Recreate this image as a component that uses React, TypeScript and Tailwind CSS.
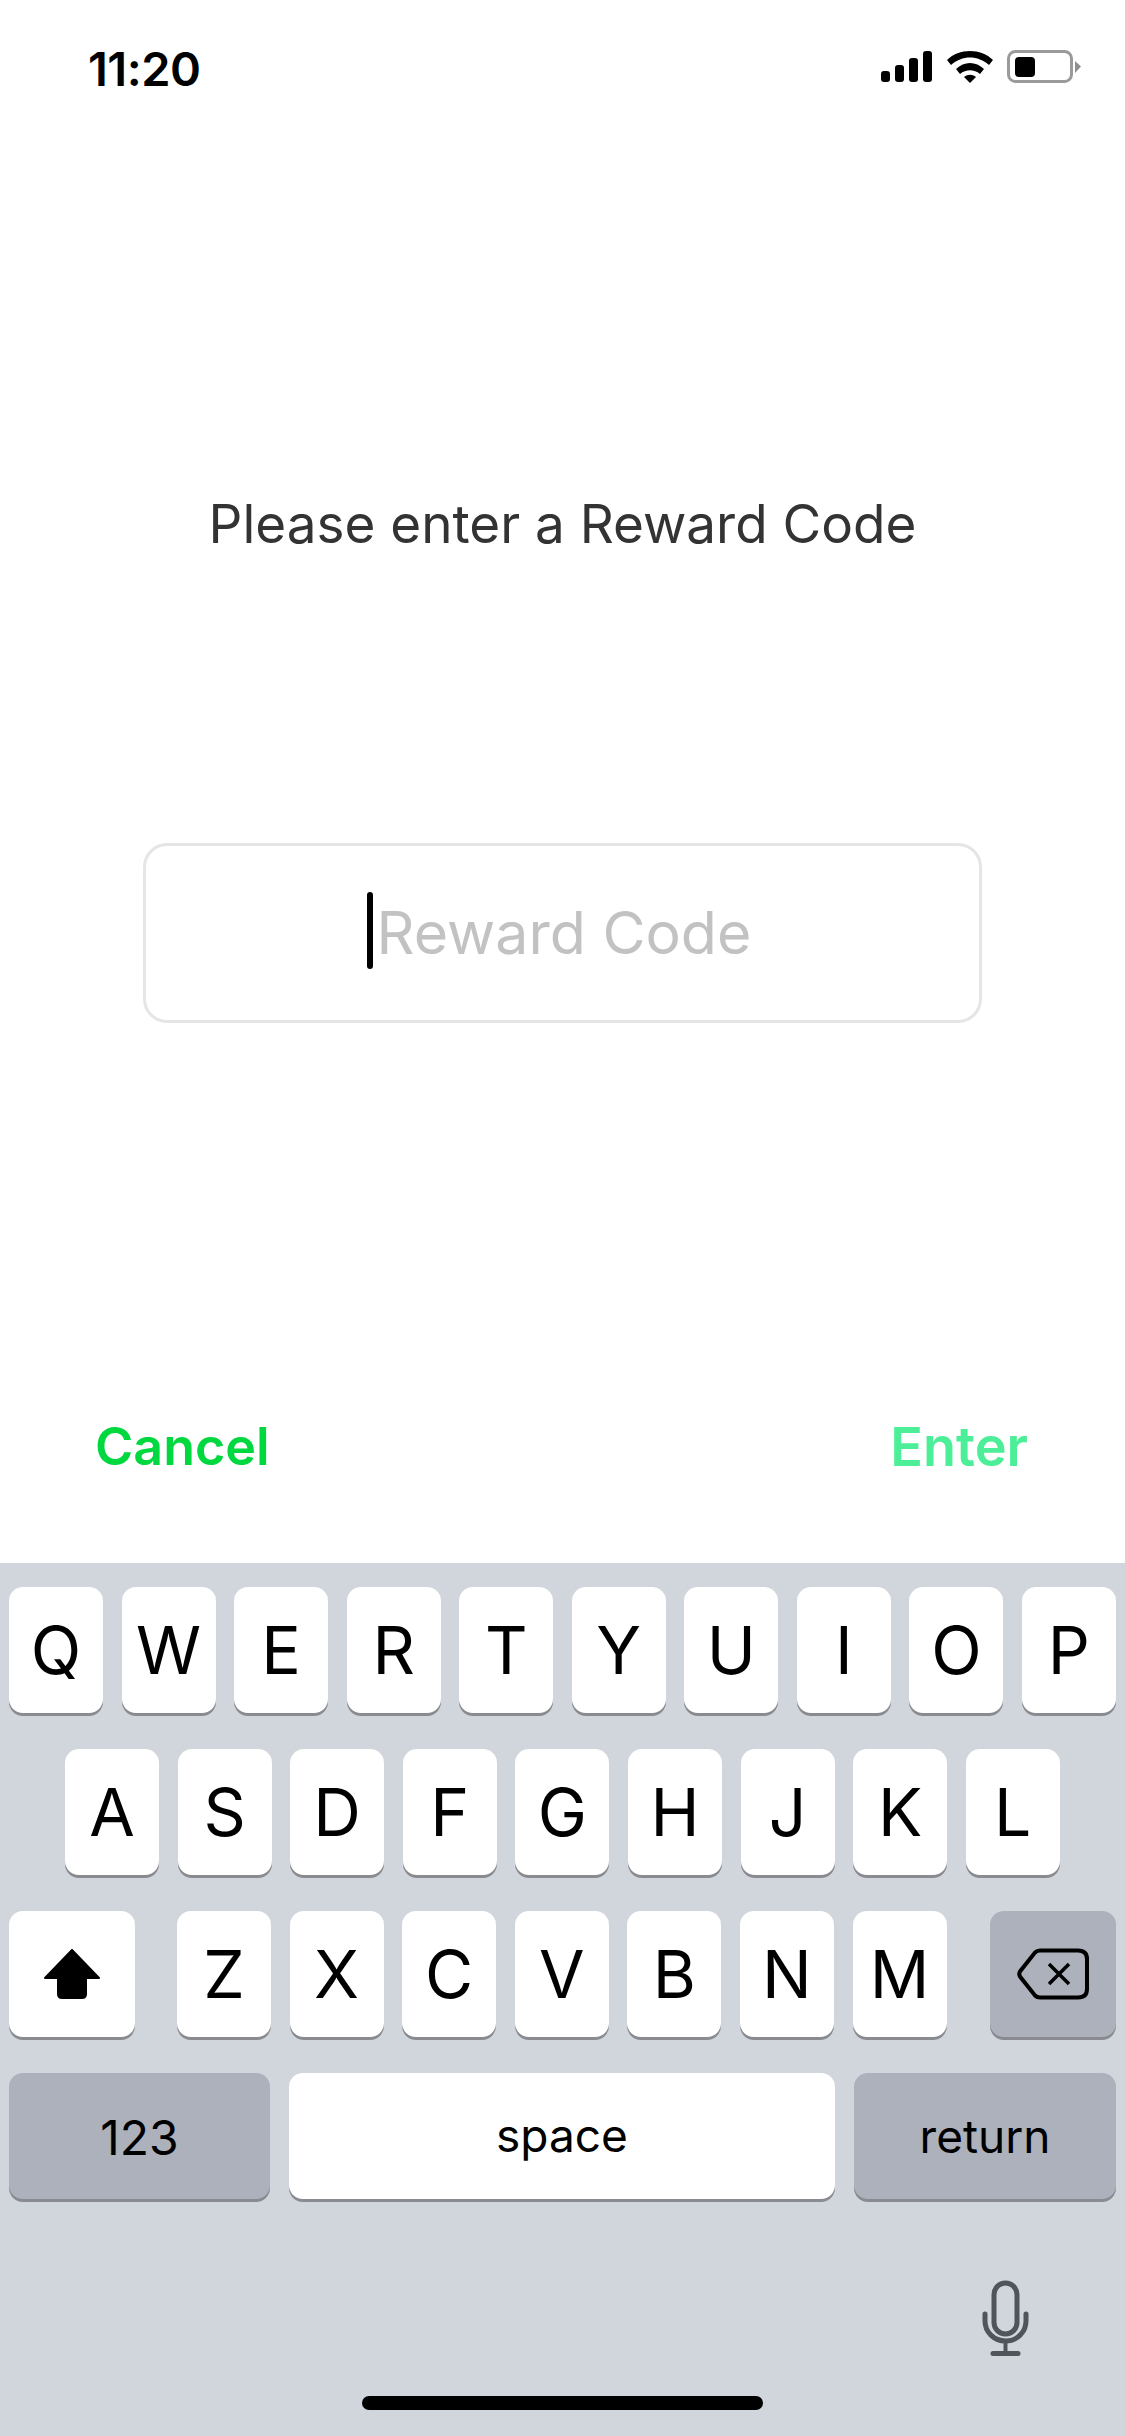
import React from 'react';

const rowOne = ['Q', 'W', 'E', 'R', 'T', 'Y', 'U', 'I', 'O', 'P'];
const rowTwo = ['A', 'S', 'D', 'F', 'G', 'H', 'J', 'K', 'L'];
const rowThree = ['Z', 'X', 'C', 'V', 'B', 'N', 'M'];

const keyShadow = 'shadow-[0_3px_0_#8a8b90]';

const LetterKey: React.FC<{ label: string }> = ({ label }) => (
  <div className={`w-[94px] h-[126px] bg-white rounded-[14px] ${keyShadow} flex items-center justify-center text-[66px] text-black`}>
    {label}
  </div>
);

const StatusIcons = () => (
  <svg width="200" height="40" viewBox="0 0 200 40" className="block">
    <rect x="0" y="23" width="9" height="11" rx="3" fill="#000" />
    <rect x="14" y="17" width="9" height="17" rx="3" fill="#000" />
    <rect x="28" y="10" width="9" height="24" rx="3" fill="#000" />
    <rect x="42" y="3" width="9" height="31" rx="3" fill="#000" />
    <path d="M66 12 C78 0 100 0 112 12 L108 17 C97 7 81 7 70 17 Z" fill="#000" />
    <path d="M75 21 C83 13 95 13 103 21 L99 26 C93 21 85 21 79 26 Z" fill="#000" />
    <path d="M83 29 C87 26 91 26 95 29 L89 35 Z" fill="#000" />
    <rect x="127.5" y="3.5" width="63" height="30" rx="7" fill="none" stroke="#9a9a9a" strokeWidth="3" />
    <rect x="134" y="9" width="20" height="20" rx="4" fill="#000" />
    <path d="M194 13 L200 18.5 L194 25 Z" fill="#8e8e8e" />
  </svg>
);

const MicIcon = () => (
  <svg width="50" height="78" viewBox="0 0 50 78" className="block">
    <rect x="12" y="3" width="23" height="51" rx="11.5" fill="none" stroke="#50555c" strokeWidth="5" />
    <path d="M3 34 V41 C3 52 12 61 23.5 61 C35 61 44 52 44 41 V34" fill="none" stroke="#50555c" strokeWidth="5" strokeLinecap="round" />
    <path d="M23.5 61 V73" stroke="#50555c" strokeWidth="4" />
    <path d="M11 73.5 H36" stroke="#50555c" strokeWidth="5" strokeLinecap="round" />
  </svg>
);

export default function App() {
  return (
    <div className="w-[1125px] h-[2436px] bg-white flex flex-col [font-family:Inter,sans-serif]">
      <div className="flex-1 flex flex-col">
        {/* Status bar */}
        <div className="flex items-center justify-between pl-[88px] pr-[44px] pt-[46px] h-[90px]">
          <span className="text-[47px] leading-none font-semibold text-black tracking-[-0.5px]">11:20</span>
          <StatusIcons />
        </div>

        <p className="mt-[404px] text-center text-[53px] leading-[60px] text-[#333333]">Please enter a Reward Code</p>

        {/* Code field */}
        <div className="mt-[289px] mx-[143px] h-[180px] pr-[7px] pb-[2px] border-[3px] border-[#e5e5e5] rounded-[24px] flex items-center justify-center">
          <span className="w-[6px] h-[77px] rounded-full bg-black mr-[4px] mb-[3px]" />
          <span className="text-[59px] leading-none text-[#c2c2c2]">Reward Code</span>
        </div>

        <div className="mt-[394px] flex items-center justify-between pl-[95px] pr-[97px] leading-[60px] font-semibold">
          <span className="text-[52px] text-[#00d83f]">Cancel</span>
          <span className="text-[54px] text-[#4cee97]">Enter</span>
        </div>
      </div>

      {/* Keyboard */}
      <div className="h-[873px] bg-[#d1d5dc] pt-[24px] px-[9px] flex flex-col">
        <div className="flex justify-between">
          {rowOne.map((key) => (
            <LetterKey key={key} label={key} />
          ))}
        </div>
        <div className="mt-[36px] pl-[56px] flex gap-[18.6px]">
          {rowTwo.map((key) => (
            <LetterKey key={key} label={key} />
          ))}
        </div>
        <div className="mt-[36px] flex">
          <div className={`w-[126px] h-[126px] bg-white rounded-[14px] ${keyShadow} flex items-center justify-center`}>
            <svg width="58" height="50" viewBox="0 0 58 50">
              <path d="M29 1 L56 29 H43 V45 Q43 49 39 49 H19 Q15 49 15 45 V29 H2 Z" fill="#000" stroke="#000" strokeWidth="2" strokeLinejoin="round" />
            </svg>
          </div>
          <div className="ml-[42px] flex gap-[18.6px]">
            {rowThree.map((key) => (
              <LetterKey key={key} label={key} />
            ))}
          </div>
          <div className={`ml-auto w-[126px] h-[126px] bg-[#acb1bc] rounded-[14px] ${keyShadow} flex items-center justify-center`}>
            <svg width="70" height="50" viewBox="0 0 70 50" className="overflow-visible">
              <path d="M22 1.5 H60 Q69 1.5 69 10 V40 Q69 48.5 60 48.5 H22 Q19 48.5 17 46.5 L2 27.5 Q0.5 25 2 22.5 L17 3.5 Q19 1.5 22 1.5 Z" fill="none" stroke="#000" strokeWidth="4" />
              <path d="M31 15 L51 35 M51 15 L31 35" stroke="#000" strokeWidth="3.5" />
            </svg>
          </div>
        </div>
        <div className="mt-[36px] flex justify-between">
          <div className={`w-[261px] h-[126px] pt-[3px] bg-[#acb1bc] rounded-[14px] ${keyShadow} flex items-center justify-center text-[48px] text-black`}>123</div>
          <div className={`w-[546px] h-[126px] pb-[2px] bg-white rounded-[14px] ${keyShadow} flex items-center justify-center text-[46px] text-black`}>space</div>
          <div className={`w-[262px] h-[126px] bg-[#acb1bc] rounded-[14px] ${keyShadow} flex items-center justify-center text-[46px] text-black`}>return</div>
        </div>
        <div className="mt-[81px] flex justify-end pr-[84px]">
          <MicIcon />
        </div>
        <div className="mt-[38px] mx-auto w-[401px] h-[14px] rounded-full bg-black" />
      </div>
    </div>
  );
}
